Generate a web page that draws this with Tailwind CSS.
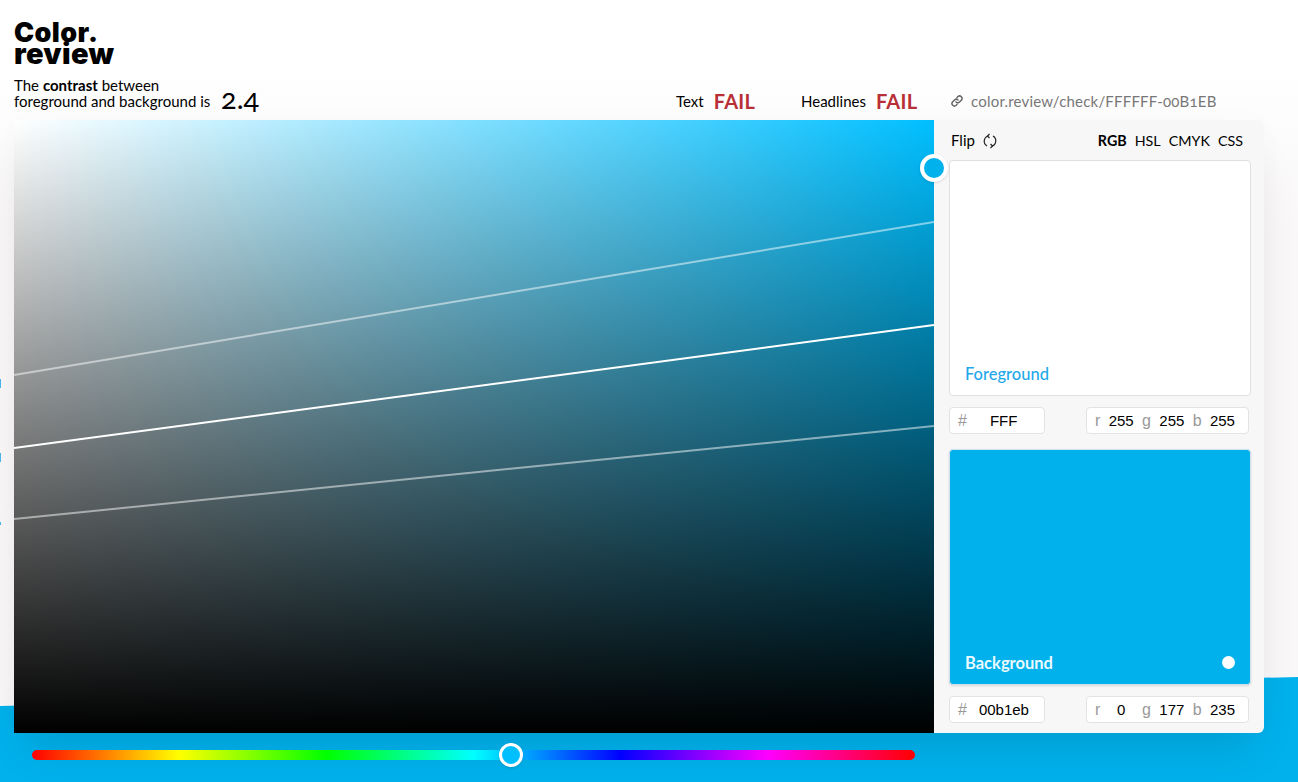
<!DOCTYPE html>
<html lang="en">
<head>
    <meta charset="UTF-8">
    <meta name="viewport" content="width=device-width, initial-scale=1.0">
    <title>Color Review</title>
    <script src="https://cdn.jsdelivr.net/npm/@tailwindcss/browser@4"></script>
</head>
<body class="relative w-[1298px] h-[782px] overflow-hidden bg-gradient-to-b from-white from-[8%] to-[#f9f7f7] to-[30%] text-black font-['Lato','Open_Sans',sans-serif]">
    <!-- slanted blue band behind the picker -->
    <div class="absolute inset-0 bg-[#00b1eb] [clip-path:polygon(0_706px,100%_677px,100%_100%,0_100%)]"></div>

    <!-- stray marks at the left edge -->
    <div class="absolute left-0 top-[379px] w-[1px] h-[9px] bg-[#1fa8ea]/80"></div>
    <div class="absolute left-0 top-[453px] w-[1px] h-[9px] bg-[#1fa8ea]/80"></div>
    <div class="absolute left-0 top-[522px] w-[1px] h-[3px] bg-[#1fa8ea]/80"></div>

    <div class="relative pl-[14px]">
        <!-- Header -->
        <div class="h-[120px] flex flex-col">
            <div class="pt-[22px] h-[76px] font-['Inter',sans-serif] font-black leading-[21px]">
                <div class="text-[27px] tracking-[0.4px]">Color.</div>
                <div class="text-[29px] tracking-[0.3px]">review</div>
            </div>
            <div class="flex items-end h-[44px] oldstyle-nums">
                <div class="w-[207px] text-[15px] leading-[16px] pb-[11px]">
                    The <b class="font-bold">contrast</b> between<br>foreground and background is
                </div>
                <div class="text-[29px] leading-[30px] pb-[7px] w-[455px] font-normal">2.4</div>
                <div class="flex items-center w-[125px] pb-[11px] text-[15px] leading-[16px]">
                    <span class="mr-[10px]">Text</span><span class="text-[#b92f36] font-bold text-[20px] tracking-[0.3px]">FAIL</span>
                </div>
                <div class="flex items-center w-[150px] pb-[11px] text-[15px] leading-[16px]">
                    <span class="mr-[10px]">Headlines</span><span class="text-[#b92f36] font-bold text-[20px] tracking-[0.3px]">FAIL</span>
                </div>
                <div class="flex items-center pb-[11px] text-[15px] leading-[16px] text-[#777] tracking-[0.2px]">
                    <svg class="w-[12px] h-[12px] mr-[8px]" viewBox="0 0 24 24" fill="none" stroke="#666" stroke-width="3" stroke-linecap="round"><path d="M10 14a5 5 0 0 0 7 0l4-4a5 5 0 0 0-7-7l-2 2"/><path d="M14 10a5 5 0 0 0-7 0l-4 4a5 5 0 0 0 7 7l2-2"/></svg>
                    color.review/check/FFFFFF-00B1EB
                </div>
            </div>
        </div>

        <!-- Picker and panel -->
        <div class="flex w-[1250px] h-[613px] rounded-r-[6px] shadow-[0_25px_40px_-10px_rgba(0,0,0,0.1),0_0_40px_rgba(0,0,0,0.015)]">
            <div class="relative w-[920px] h-[613px] bg-[linear-gradient(to_bottom,transparent,#000),linear-gradient(to_right,#fff,#00bfff)]">
                <svg class="absolute inset-0" width="920" height="613" fill="none" stroke="#fff">
                    <path d="M0 255 L920 102" stroke-opacity="0.5" stroke-width="2"/>
                    <path d="M0 328 L920 205" stroke-width="2"/>
                    <path d="M0 399 L920 306" stroke-opacity="0.5" stroke-width="2"/>
                </svg>
                <div class="absolute left-[906px] top-[34px] w-[28px] h-[28px] rounded-full bg-[#00b1eb] border-[4px] border-white shadow"></div>
            </div>

            <div class="w-[330px] h-[613px] bg-[#f7f7f7] rounded-r-[6px] pl-[15px] pr-[13px]">
                <div class="h-[40px] flex items-center justify-between text-[15px] pl-[2px] pr-[8px] pt-[1px]">
                    <div class="flex items-center gap-[7px]">
                        Flip
                        <svg class="w-[16px] h-[16px]" viewBox="0 0 16 16" fill="none" stroke="#222" stroke-width="1.2"><path d="M6 3a5.5 5.5 0 0 0-1 10"/><path d="M10 13a5.5 5.5 0 0 0 1-10"/><path d="M7.5 1 5.5 3l2 2"/><path d="M8.5 15l2-2-2-2"/></svg>
                    </div>
                    <div class="flex gap-[8px] text-[14.3px]">
                        <b class="font-bold">RGB</b><span>HSL</span><span>CMYK</span><span>CSS</span>
                    </div>
                </div>

                <div class="h-[236px] w-[302px] bg-white border border-[#e0e0e0] rounded-[4px] flex items-end px-[15px] pb-[12px]">
                    <span class="text-[16.5px] font-medium text-[#1fa8ea] leading-[18px]">Foreground</span>
                </div>
                <div class="flex justify-between w-[300px] h-[27px] mt-[11px] font-['Liberation_Sans',sans-serif] text-[15px]">
                    <div class="w-[96px] bg-white border border-[#e3e3e3] rounded-[4px] flex items-center px-[8px] pt-[1px]">
                        <span class="text-[#999] text-[16px]">#</span><span class="ml-[23px]">FFF</span>
                    </div>
                    <div class="w-[163px] bg-white border border-[#e3e3e3] rounded-[4px] flex items-center justify-between pl-[8px] pr-[13px] pt-[1px]">
                        <span class="text-[#999] text-[16px]">r</span><span>255</span><span class="text-[#999] text-[16px]">g</span><span>255</span><span class="text-[#999] text-[16px]">b</span><span>255</span>
                    </div>
                </div>

                <div class="h-[236px] w-[302px] mt-[15px] bg-[#00b1eb] border border-[#cfe3ec] rounded-[4px] shadow-sm flex items-end justify-between pl-[15px] pr-[15px] pb-[12px]">
                    <span class="text-[16.5px] font-bold text-[#eafaff] leading-[18px]">Background</span>
                    <span class="w-[13px] h-[13px] rounded-full bg-white mb-[3px]"></span>
                </div>
                <div class="flex justify-between w-[300px] h-[27px] mt-[11px] font-['Liberation_Sans',sans-serif] text-[15px]">
                    <div class="w-[96px] bg-white border border-[#e3e3e3] rounded-[4px] flex items-center px-[8px] pt-[1px]">
                        <span class="text-[#999] text-[16px]">#</span><span class="ml-[12px]">00b1eb</span>
                    </div>
                    <div class="w-[163px] bg-white border border-[#e3e3e3] rounded-[4px] flex items-center justify-between pl-[8px] pr-[13px] pt-[1px]">
                        <span class="text-[#999] text-[16px]">r</span><span class="w-[25px] text-center">0</span><span class="text-[#999] text-[16px]">g</span><span>177</span><span class="text-[#999] text-[16px]">b</span><span>235</span>
                    </div>
                </div>
            </div>
        </div>

        <!-- Hue slider -->
        <div class="relative ml-[18px] mt-[17px] w-[883px] h-[10px] rounded-full bg-[linear-gradient(to_right,#f00,#ff0_16.67%,#0f0_33.33%,#0ff_50%,#00f_66.67%,#f0f_83.33%,#f00)]">
            <div class="absolute left-[467px] top-[-7px] w-[24px] h-[24px] rounded-full bg-[#00bfff] border-[3px] border-white shadow"></div>
        </div>
    </div>
</body>
</html>
